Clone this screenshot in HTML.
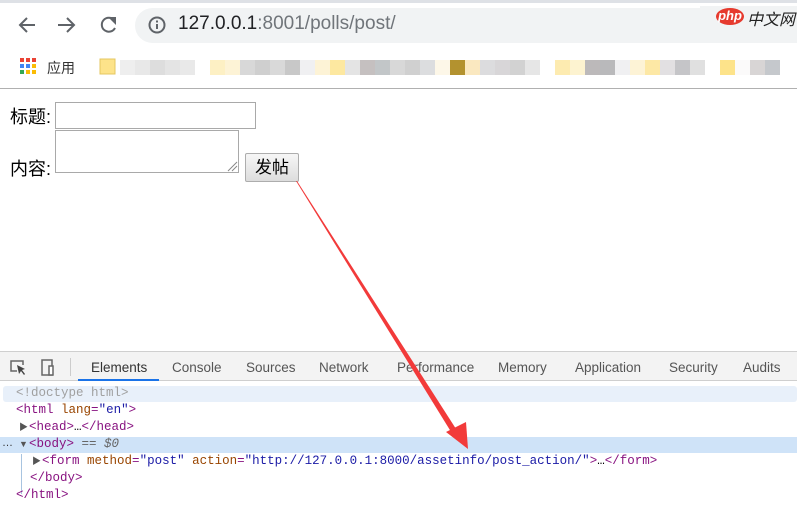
<!DOCTYPE html>
<html><head><meta charset="utf-8"><style>
*{margin:0;padding:0;box-sizing:border-box}
body{width:797px;height:531px;overflow:hidden;background:#fff;font-family:"Liberation Sans","Noto Sans CJK SC",sans-serif;position:relative}
.abs{position:absolute}
.mono{font-family:"Liberation Mono","DejaVu Sans Mono",monospace;font-size:12.5px;line-height:17px;white-space:pre}
.t{color:#881280}.a{color:#994500}.v{color:#1a1aa6}.g{color:#a0a0a0}
.tab{position:absolute;top:360px;font-size:13.5px;color:#555}
.tri{position:absolute;font-size:9px;color:#555;line-height:17px}
</style></head><body>
<div class="abs" style="left:0;top:0;width:797px;height:3px;background:#dee1e6"></div>
<svg class="abs" style="left:0;top:0" width="140" height="50">
<g stroke="#5f6368" stroke-width="2" fill="none">
<path d="M20 25h15M27 18l-7 7 7 7"/>
<path d="M58 25h16M67 18l7 7-7 7"/>
<path d="M114 20a7 7 0 1 0 1 8"/>
</g>
<path d="M108 17h8v8z" fill="#5f6368"/>
</svg>
<div class="abs" style="left:135px;top:8px;width:700px;height:35px;border-radius:18px;background:#f1f3f4"></div>
<svg class="abs" style="left:147px;top:15px" width="20" height="20"><circle cx="10" cy="10" r="7.5" stroke="#5f6368" stroke-width="2" fill="none"/><rect x="9" y="9" width="2" height="5" fill="#5f6368"/><rect x="9" y="5.5" width="2" height="2" fill="#5f6368"/></svg>
<div class="abs" style="left:178px;top:13px;font-size:19px;color:#202124">127.0.0.1<span style="color:#70757a">:8001/polls/post/</span></div>
<div class="abs" style="left:700px;top:6px;width:97px;height:26px;background:#f1f3f4"></div>
<div class="abs" style="left:716px;top:8px;width:28px;height:17px;border-radius:50%;background:#e63a2e;color:#fff;font-size:13px;font-style:italic;font-weight:bold;line-height:16px;text-align:center">php</div>
<div class="abs" style="left:747px;top:6px;font-size:16px;color:#222;font-style:italic">中文网</div>
<svg class="abs" style="left:20px;top:58px" width="18" height="18">
<rect x="0" y="0" width="4" height="4" fill="#ea4335"/><rect x="6" y="0" width="4" height="4" fill="#ea4335"/><rect x="12" y="0" width="4" height="4" fill="#ea4335"/>
<rect x="0" y="6" width="4" height="4" fill="#4285f4"/><rect x="6" y="6" width="4" height="4" fill="#4285f4"/><rect x="12" y="6" width="4" height="4" fill="#fbbc05"/>
<rect x="0" y="12" width="4" height="4" fill="#34a853"/><rect x="6" y="12" width="4" height="4" fill="#fbbc05"/><rect x="12" y="12" width="4" height="4" fill="#fbbc05"/>
</svg>
<div class="abs" style="left:47px;top:58px;font-size:14px;color:#333">应用</div>
<svg class="abs" style="left:0;top:55px" width="797" height="25">
<g>
<rect x="100" y="4" width="15" height="15" fill="#fde38a" stroke="#e5c760"/>
<rect x="120" y="5" width="15" height="15" fill="#eee"/><rect x="135" y="5" width="15" height="15" fill="#e8e8e8"/><rect x="150" y="5" width="15" height="15" fill="#ddd"/><rect x="165" y="5" width="15" height="15" fill="#e4e4e4"/><rect x="180" y="5" width="15" height="15" fill="#e9e9e9"/>
<rect x="210" y="5" width="15" height="15" fill="#fdf0c4"/><rect x="225" y="5" width="15" height="15" fill="#fdf3d6"/><rect x="240" y="5" width="15" height="15" fill="#d8d8d8"/><rect x="255" y="5" width="15" height="15" fill="#cfcfcf"/><rect x="270" y="5" width="15" height="15" fill="#d9d9d9"/><rect x="285" y="5" width="15" height="15" fill="#c8c8c8"/>
<rect x="300" y="5" width="15" height="15" fill="#f0f0f2"/><rect x="315" y="5" width="15" height="15" fill="#fdf3d6"/><rect x="330" y="5" width="15" height="15" fill="#fde8a0"/><rect x="345" y="5" width="15" height="15" fill="#e4e4e4"/><rect x="360" y="5" width="15" height="15" fill="#c5c0c0"/><rect x="375" y="5" width="15" height="15" fill="#c2c6c8"/><rect x="390" y="5" width="15" height="15" fill="#d8d8d8"/><rect x="405" y="5" width="15" height="15" fill="#d0d0d0"/><rect x="420" y="5" width="15" height="15" fill="#dcdddf"/><rect x="435" y="5" width="15" height="15" fill="#fdf7e8"/><rect x="450" y="5" width="15" height="15" fill="#b3922f"/><rect x="465" y="5" width="15" height="15" fill="#fae8c0"/><rect x="480" y="5" width="15" height="15" fill="#dcdcde"/><rect x="495" y="5" width="15" height="15" fill="#d8d6d8"/><rect x="510" y="5" width="15" height="15" fill="#d2d2d2"/><rect x="525" y="5" width="15" height="15" fill="#e6e6e6"/>
<rect x="555" y="5" width="15" height="15" fill="#fdebb0"/><rect x="570" y="5" width="15" height="15" fill="#fdf3d0"/><rect x="585" y="5" width="15" height="15" fill="#bcb9ba"/><rect x="600" y="5" width="15" height="15" fill="#b9b9bb"/><rect x="615" y="5" width="15" height="15" fill="#f0f0f2"/><rect x="630" y="5" width="15" height="15" fill="#fdf3d6"/><rect x="645" y="5" width="15" height="15" fill="#fde8a5"/><rect x="660" y="5" width="15" height="15" fill="#e2e0e2"/><rect x="675" y="5" width="15" height="15" fill="#c5c5c8"/><rect x="690" y="5" width="15" height="15" fill="#e0e0e0"/>
<rect x="720" y="5" width="15" height="15" fill="#fde38a"/><rect x="735" y="5" width="15" height="15" fill="#fbfafa"/><rect x="750" y="5" width="15" height="15" fill="#d8d5d5"/><rect x="765" y="5" width="15" height="15" fill="#c5c8cc"/>
</g></svg>
<div class="abs" style="left:0;top:88px;width:797px;height:1px;background:#b0b0b0"></div>
<div class="abs" style="left:10px;top:103px;font-size:18px;color:#000">标题:</div>
<div class="abs" style="left:55px;top:102px;width:201px;height:27px;border:1px solid #a9a9a9;background:#fff"></div>
<div class="abs" style="left:55px;top:130px;width:184px;height:43px;border:1px solid #a9a9a9;background:#fff"></div>
<svg class="abs" style="left:226px;top:160px" width="12" height="12"><path d="M2 11L11 2M6 11L11 6" stroke="#888" stroke-width="1"/></svg>
<div class="abs" style="left:10px;top:155px;font-size:18px;color:#000">内容:</div>
<div class="abs" style="left:245px;top:153px;width:54px;height:29px;border:1px solid #adadad;border-radius:2px;background:linear-gradient(#f6f6f6,#dddddd);font-size:17px;line-height:27px;text-align:center;color:#000">发帖</div>
<div class="abs" style="left:0;top:351px;width:797px;height:30px;background:#f3f3f3;border-top:1px solid #cfcfcf;border-bottom:1px solid #cfcfcf"></div>
<svg class="abs" style="left:8px;top:358px" width="55" height="20">
<path d="M9 13H3V3h12v4" stroke="#666" stroke-width="1.5" fill="none"/><path d="M9 7l8 4-3 1 3 4-1 1-3-4-2 3z" fill="#444"/>
<rect x="34" y="2" width="10" height="15" stroke="#666" stroke-width="1.5" fill="none"/><rect x="41" y="8" width="4" height="9" fill="#fff" stroke="#666" stroke-width="1.5"/>
</svg>
<div class="abs" style="left:70px;top:358px;width:1px;height:18px;background:#ccc"></div>
<div class="tab" style="left:91px;color:#333">Elements</div>
<div class="abs" style="left:78px;top:379px;width:81px;height:2px;background:#1a73e8"></div>
<div class="tab" style="left:172px">Console</div>
<div class="tab" style="left:246px">Sources</div>
<div class="tab" style="left:319px">Network</div>
<div class="tab" style="left:397px">Performance</div>
<div class="tab" style="left:498px">Memory</div>
<div class="tab" style="left:575px">Application</div>
<div class="tab" style="left:669px">Security</div>
<div class="tab" style="left:743px">Audits</div>
<div class="abs" style="left:3px;top:386px;width:794px;height:16px;background:#e8f0fa;border-radius:3px"></div>
<div class="abs" style="left:0;top:437px;width:797px;height:16px;background:#cfe3f8"></div>
<div class="abs" style="left:21px;top:454px;width:1px;height:40px;background:#a8c4e0"></div>
<div class="abs mono g" style="left:16px;top:385px">&lt;!doctype html&gt;</div>
<div class="abs mono" style="left:16px;top:402px"><span class="t">&lt;html</span> <span class="a">lang</span><span class="t">=</span><span class="v">"en"</span><span class="t">&gt;</span></div>
<div class="tri" style="left:19px;top:419px">▶</div>
<div class="abs mono" style="left:29px;top:419px"><span class="t">&lt;head&gt;</span>…<span class="t">&lt;/head&gt;</span></div>
<div class="tri" style="left:2px;top:435px;color:#333;font-size:11px">…</div>
<div class="tri" style="left:19px;top:436px">▼</div>
<div class="abs mono" style="left:29px;top:436px"><span class="t">&lt;body&gt;</span> <span style="color:#666;font-style:italic">== $0</span></div>
<div class="tri" style="left:32px;top:453px">▶</div>
<div class="abs mono" style="left:42px;top:453px"><span class="t">&lt;form</span> <span class="a">method</span><span class="t">=</span><span class="v">"post"</span> <span class="a">action</span><span class="t">=</span><span class="v">"http://127.0.0.1:8000/assetinfo/post_action/"</span><span class="t">&gt;</span>…<span class="t">&lt;/form&gt;</span></div>
<div class="abs mono t" style="left:30px;top:470px">&lt;/body&gt;</div>
<div class="abs mono t" style="left:16px;top:487px">&lt;/html&gt;</div>
<svg class="abs" style="left:0;top:0" width="797" height="531">
<polygon points="296,181 297,181 458,432 453,435" fill="#f23a3a"/>
<polygon points="446,432 466,422 468,449" fill="#f23a3a"/>
</svg>
</body></html>
